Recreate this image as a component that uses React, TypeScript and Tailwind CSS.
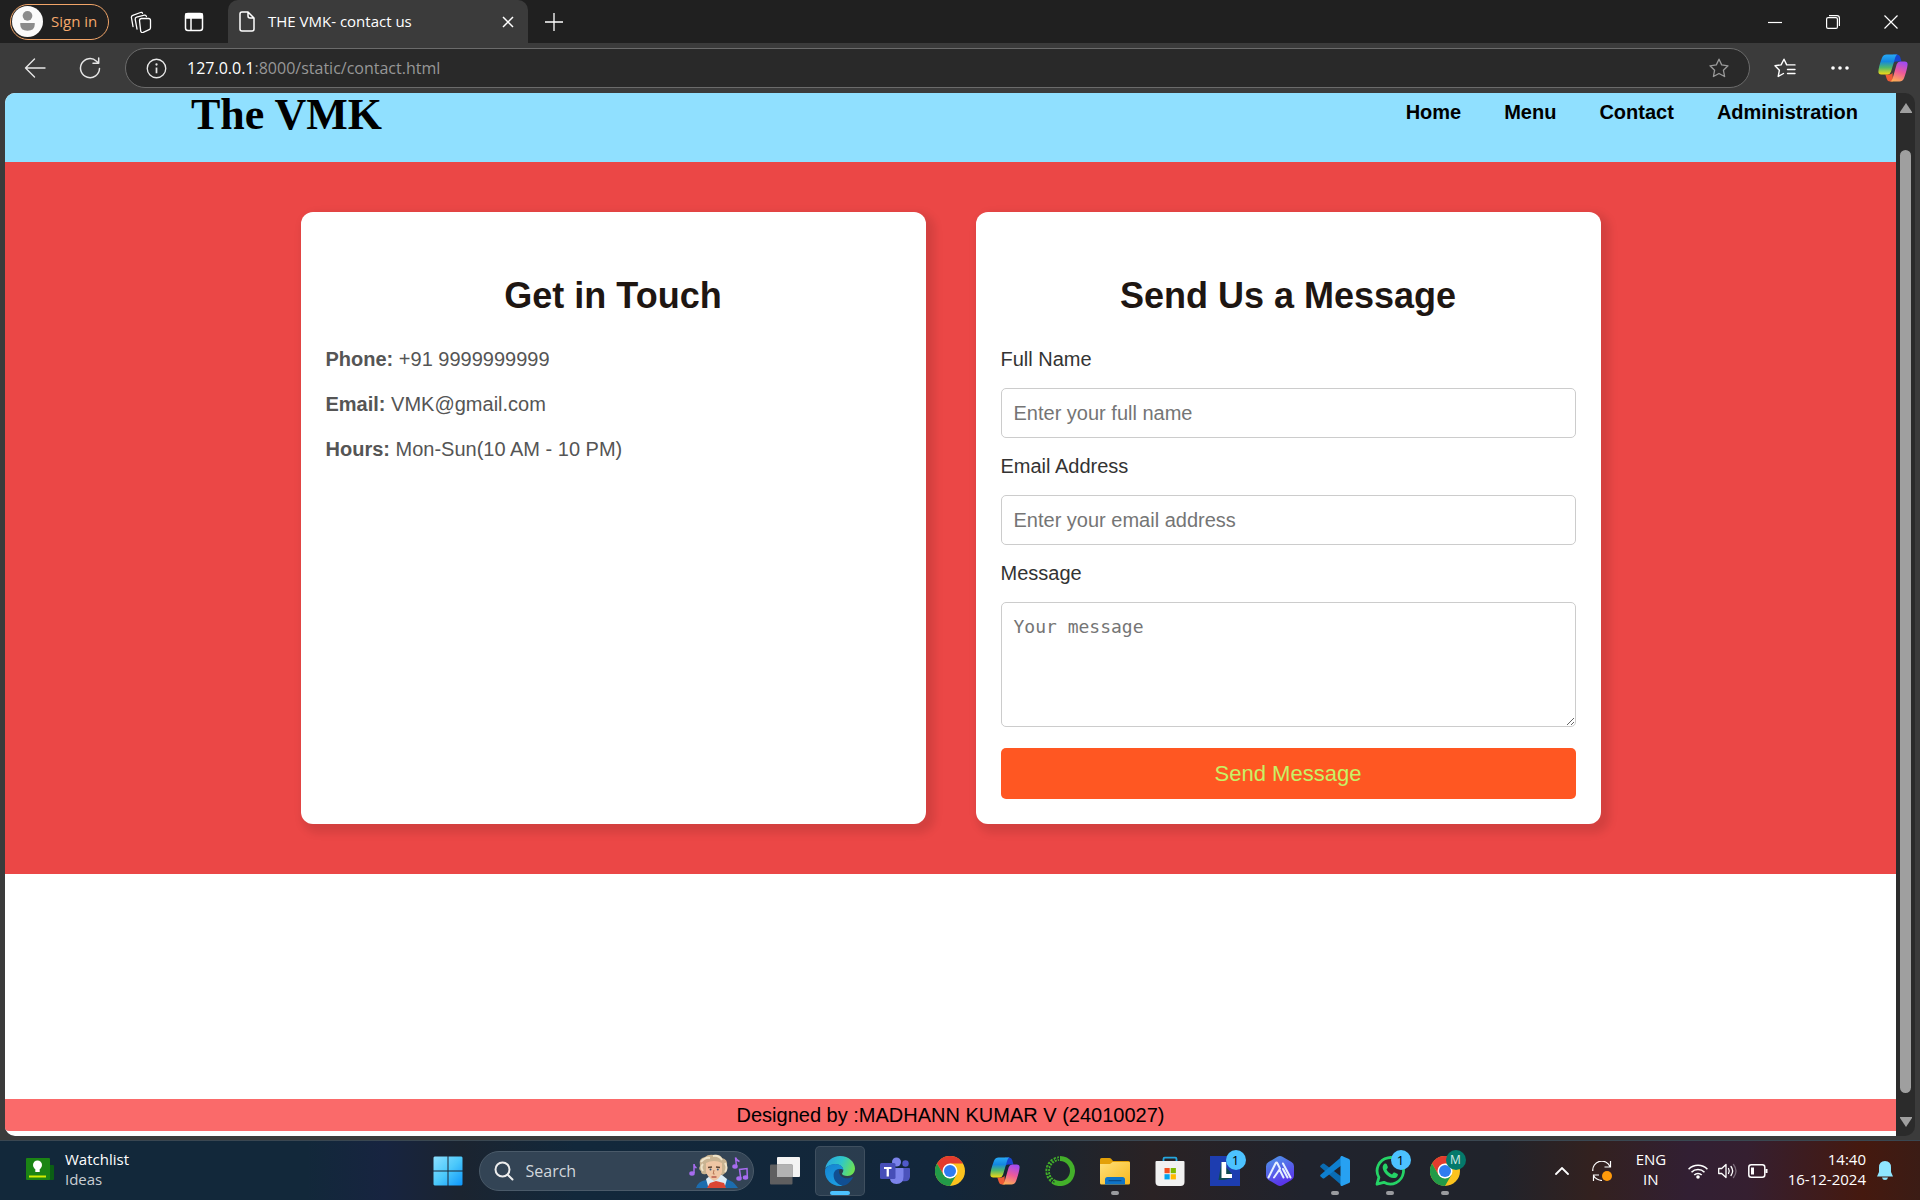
import React from "react";

const ui = "font-['Open_Sans','Noto_Sans',sans-serif]";
const sans = "font-['Liberation_Sans',Arial,sans-serif]";

function CopilotLogo({ id, className }: { id: string; className: string }) {
  return (
    <svg viewBox="0 0 30 30" className={className} aria-hidden="true">
      <defs>
        <linearGradient id={id + "a"} x1="0" y1="0" x2="0" y2="1">
          <stop offset="0" stopColor="#27a9f5" />
          <stop offset=".35" stopColor="#1487e0" />
          <stop offset=".65" stopColor="#4fb86c" />
          <stop offset="1" stopColor="#f5d913" />
        </linearGradient>
        <linearGradient id={id + "b"} x1="0.6" y1="0" x2="0.3" y2="1">
          <stop offset="0" stopColor="#a24bf0" />
          <stop offset=".5" stopColor="#ee5a98" />
          <stop offset="1" stopColor="#fdae55" />
        </linearGradient>
      </defs>
      <path d="M15 1.500h4q2.500 0 3.200 2.500l1.300 4.500h-5.500q-2 0-2.600 2z" fill="#1745cf" />
      <path d="M15 28.500h-3q-2.500 0-3.200-2.500L7.300 21.500h4q2.600 0 3.200-2z" fill="#ee5b36" />
      <path d="M8.500 1.500h11q-1.600.6-2.200 2.800l-4.300 14.400q-.9 2.800-3.600 2.800H3.300Q.2 21.500.4 18.500q.3-5 3.600-13.700Q5.500 1.500 8.500 1.500z" fill={`url(#${id}a)`} />
      <path d="M21.500 28.500h-9.300q1.700-.6 2.300-2.800l4.200-14.400q.9-2.800 3.600-2.800h4.400q3 0 2.900 3-.4 5-3.600 13.700-1.500 3.300-4.500 3.300z" fill={`url(#${id}b)`} />
    </svg>
  );
}

function ChromeLogo() {
  return (
    <svg viewBox="0 0 30 30" className="size-[30px]" aria-hidden="true">
      <circle cx="15" cy="15" r="15" fill="#fcc31e" />
      <path d="M2 7.500A15 15 0 0 1 28 7.500H15L8.500 18.800z" fill="#e33b2e" />
      <path d="M2 7.500A15 15 0 0 0 15 30l6.500-11.300L15 22.500 8.500 18.800z" fill="#229a48" />
      <circle cx="15" cy="15" r="7.500" fill="#fff" />
      <circle cx="15" cy="15" r="6" fill="#2e7cf0" />
    </svg>
  );
}

function EdgeLogo() {
  return (
    <svg viewBox="0 0 30 30" className="size-[30px]" aria-hidden="true">
      <defs>
        <linearGradient id="edgeTop" x1="0" y1=".3" x2="1" y2=".6">
          <stop offset="0" stopColor="#2aa7e0" />
          <stop offset=".5" stopColor="#2fc7c9" />
          <stop offset="1" stopColor="#6fe24f" />
        </linearGradient>
        <linearGradient id="edgeLeft" x1="0" y1="0" x2=".5" y2="1">
          <stop offset="0" stopColor="#1583d0" />
          <stop offset="1" stopColor="#1b9de2" />
        </linearGradient>
      </defs>
      <path d="M.3 12.500C1.500 5 7.500 0 15 0c9 0 15 6.400 15 12.500 0 4.500-3.500 7.500-7.500 7.500-3.500 0-5.500-1.300-5.500-2.300 0-.8 1.300-1.300 1.300-3.500 0-3-3-6-7.600-6C5.500 8.200 1.600 10.500.3 12.500z" fill="url(#edgeTop)" />
      <path d="M.2 13C2.300 9.500 6 8 10.500 8c5 0 7.900 3.200 7.900 6.200-1.300-2.300-6.900-1.700-8.200 3C8.800 22.500 12.500 28 18 29.700 8 31.500 0 24.500 0 15.500z" fill="url(#edgeLeft)" />
      <path d="M8.600 18.500c.3-3.600 3-5.700 6-5.800-2.200 5.300 2.200 9.600 7.400 9.600 2.500 0 4-.8 5-1.300.8-.2 1 .5.6 1.100C25.500 26 22 29.500 17.500 29.700 12 28.500 8.300 24 8.600 18.500z" fill="#114f93" />
    </svg>
  );
}

function TeamsLogo() {
  return (
    <svg viewBox="0 0 30 30" className="size-[30px]" aria-hidden="true">
      <circle cx="25.500" cy="7.500" r="3.200" fill="#5059c9" />
      <path d="M21 12h8.200q.8 0 .8.800v7.500q0 5-5 5h-4z" fill="#4b53bc" />
      <circle cx="16.500" cy="6" r="4.500" fill="#7b83eb" />
      <path d="M10 12h12.500q1 0 1 1v7.500q0 7.500-7 7.500T10 21z" fill="#7b83eb" />
      <rect x="0" y="7" width="15.500" height="16" rx="1.500" fill="#464eb8" />
      <path d="M4 11h7.500v2H8.900v7.500H6.600V13H4z" fill="#fff" />
    </svg>
  );
}

function AnacondaLogo() {
  return (
    <svg viewBox="0 0 30 30" className="size-[30px]" aria-hidden="true">
      <path d="M15 2.500A12.500 12.500 0 1 1 8 25.400" fill="none" stroke="#43b02a" strokeWidth="5" />
      <path d="M9.500 26.200A12.500 12.500 0 0 1 14 2.600" fill="none" stroke="#43b02a" strokeWidth="4.500" strokeDasharray="2.200 1.200" />
      <path d="M9.500 26.200A12.500 12.500 0 0 1 14 2.600" fill="none" stroke="#17302c" strokeWidth="1.200" strokeDasharray="1.500 1.300" />
    </svg>
  );
}

function FolderLogo() {
  return (
    <svg viewBox="0 0 30 30" className="size-[30px]" aria-hidden="true">
      <defs>
        <linearGradient id="folder" x1="0" y1="0" x2="1" y2="1">
          <stop offset="0" stopColor="#ffe07a" />
          <stop offset="1" stopColor="#f9b81c" />
        </linearGradient>
      </defs>
      <path d="M0 3.500Q0 2 1.500 2h8q.8 0 1.400.6L13 5h15.500Q30 5 30 6.500V12H0z" fill="#e3a008" />
      <path d="M0 8h9q1 0 1.700-.6L12.500 6H29q1 0 1 1v20q0 1.500-1.500 1.500h-27Q0 28.500 0 27z" fill="url(#folder)" />
      <path d="M5 28.500V23.500q0-2.500 2.500-2.500h15q2.500 0 2.500 2.500v5z" fill="#0f74c6" />
      <rect x="8.500" y="24" width="13" height="1.300" rx=".6" fill="#0a4c8a" />
    </svg>
  );
}

function StoreLogo() {
  return (
    <svg viewBox="0 0 30 30" className="size-[30px]" aria-hidden="true">
      <path d="M8.500 6.500V3q0-1.300 1.300-1.300h10.400q1.300 0 1.300 1.300v3.500" fill="none" stroke="#25a6de" strokeWidth="1.800" />
      <path d="M.5 6q0-1 1-1h27q1 0 1 1v20q0 4-4 4h-21q-4 0-4-4z" fill="#f1f1f1" />
      <rect x="9.500" y="12" width="5.200" height="5.200" fill="#f25022" />
      <rect x="15.700" y="12" width="5.200" height="5.200" fill="#7fba00" />
      <rect x="9.500" y="18.200" width="5.200" height="5.200" fill="#00a4ef" />
      <rect x="15.700" y="18.200" width="5.200" height="5.200" fill="#ffb900" />
    </svg>
  );
}

function LBoxLogo() {
  return (
    <svg viewBox="0 0 30 30" className="size-[30px]" aria-hidden="true">
      <rect width="30" height="30" fill="#1d3db0" />
      <path d="M11.500 6L8.500 24H14L22 22V18z" fill="#0d4a52" />
      <path d="M11.500 6h4.700v12H22v4H11.500z" fill="#fff" />
    </svg>
  );
}

function HexLogo() {
  return (
    <svg viewBox="0 0 30 30" className="size-[30px]" aria-hidden="true">
      <defs>
        <linearGradient id="hex" x1="0" y1="0" x2=".4" y2="1">
          <stop offset="0" stopColor="#4f9be8" />
          <stop offset="1" stopColor="#5a34ea" />
        </linearGradient>
      </defs>
      <path d="M12.500.8q2.500-1.400 5 0l9 5.200q2.500 1.400 2.500 4.200v9.600q0 2.800-2.500 4.200l-9 5.200q-2.500 1.400-5 0l-9-5.200Q1 22.600 1 19.800v-9.600Q1 7.400 3.500 6z" fill="url(#hex)" />
      <path d="M3.500 21.500L10.500 7.500q1-1.800 2 0L15 12.500M9 21.500l5.500-8M14.500 13.500l4 8M18 7.500l7.500 14M18 13l4.500 8.500" fill="none" stroke="#e6f0ff" strokeWidth="2" strokeLinejoin="round" strokeLinecap="round" />
    </svg>
  );
}

function VsCodeLogo() {
  return (
    <svg viewBox="0 0 30 30" className="size-[30px]" aria-hidden="true">
      <path d="M.6 9.500l2-1.700q.9-.7 1.700 0L22.500 21.500V30L.6 11.200q-.9-.8 0-1.700z" fill="#0a6cb3" />
      <path d="M.6 20.500l2 1.700q.9.700 1.700 0L22.500 8.500V0L.6 18.800q-.9.800 0 1.700z" fill="#0e7fcf" />
      <path d="M22 0l7 3q1 .5 1 1.500v21q0 1-1 1.500l-7 3q-1.500.2-1.500-1.300V1.300Q20.500-.2 22 0z" fill="#27a1f2" />
    </svg>
  );
}

function WhatsAppLogo() {
  return (
    <svg viewBox="0 0 30 30" className="size-[30px]" aria-hidden="true">
      <path d="M2 28.200l1.900-6.800A13.200 13.200 0 1 1 8.900 26.300z" fill="none" stroke="#25d366" strokeWidth="2.800" strokeLinejoin="round" />
      <path d="M9.800 7.600c.6-.3 1.400-.3 1.800.5l1.200 2.700c.2.500 0 1-.3 1.400l-1 1.200c1.300 2.400 3 3.900 5.500 5l1.400-1.600c.4-.5.8-.5 1.300-.3l2.600 1.300c.6.300.7.700.5 1.400-.6 2-2.300 3.100-4.300 2.900C13 21.500 8.500 16.500 7.700 12c-.2-1.700.8-3.800 2.100-4.400z" fill="#25d366" />
    </svg>
  );
}

function TaskViewLogo() {
  return (
    <svg viewBox="0 0 30 30" className="size-[30px]" aria-hidden="true">
      <rect x="7" y="1" width="23" height="20" rx="1" fill="#f3f3f3" />
      <rect x="0" y="8.500" width="22.500" height="20" rx="1" fill="#5f5f60" />
      <rect x="7" y="8.500" width="15.500" height="12.500" fill="#b3b3b3" />
    </svg>
  );
}

function WindowsLogo() {
  return (
    <svg viewBox="0 0 30 30" className="size-[30px]" aria-hidden="true">
      <defs>
        <linearGradient id="win" x1="0" y1="0" x2="30" y2="30" gradientUnits="userSpaceOnUse">
          <stop offset="0" stopColor="#8fe0ff" />
          <stop offset=".5" stopColor="#4cc9fb" />
          <stop offset="1" stopColor="#0a94fb" />
        </linearGradient>
      </defs>
      <path d="M1.500 .5H14.500V14.500H.5V1.500zM15.500 .5H28.500L29.500 1.500V14.500H15.500zM.5 15.500H14.500V29.500H1.500L.5 28.500zM15.500 15.500H29.500V28.500L28.500 29.500H15.500z" fill="url(#win)" />
    </svg>
  );
}

function ComposerArt() {
  return (
    <svg viewBox="0 0 60 34" className="h-[34px] w-[60px]" aria-hidden="true">
      <path d="M7 34Q9 27 17 26L25 23L34 24Q44 26 49 34z" fill="#1c6cae" />
      <path d="M17 25l5-4h11l5 4-2 7-9 2-8-2z" fill="#dcebf5" />
      <path d="M21 29l6-2 8 2 2 5H18z" fill="#dc4634" />
      <path d="M11 12Q9 4 16 3q3-3 9-2 6-1 8 3 6 1 5 8 1 5-3 8-2 2-4 0H17q-5 1-5-3-3-2-1-5z" fill="#c9b391" />
      <path d="M12 8q4-5 9-4M14 17q-3-4 0-7M36 18q3-4 0-9M24 2q6-1 9 4" fill="none" stroke="#efe3c9" strokeWidth="2" />
      <path d="M17 9q8-4 16 0v9q-2 7-8 9-6-3-8-9z" fill="#efc6a4" />
      <path d="M19 13.500l4-.5M27 13l4 .5" stroke="#5f4431" strokeWidth="1.300" />
      <circle cx="21.500" cy="15.500" r="1" fill="#3a5878" />
      <circle cx="28.800" cy="15.500" r="1" fill="#3a5878" />
      <path d="M25 16l-.8 4 1.500 0" fill="none" stroke="#b87856" strokeWidth="1" />
      <path d="M22.500 23h5" stroke="#b04a3d" strokeWidth="1.300" />
      <g fill="#a86cf0" stroke="#a86cf0" strokeWidth="1.500">
        <ellipse cx="3" cy="19.500" rx="2" ry="1.500" />
        <path d="M5 19V10q0 2.500 2.500 4" fill="none" />
        <ellipse cx="46" cy="12.500" rx="2" ry="1.500" />
        <path d="M47.500 12L46.500 3.500q1 3 4 4" fill="none" />
        <ellipse cx="50" cy="24.500" rx="2" ry="1.500" />
        <ellipse cx="56.500" cy="23.500" rx="2" ry="1.500" />
        <path d="M51.700 24L50.500 15.500l7.500-1L58.300 23" fill="none" />
      </g>
    </svg>
  );
}

function BrowserTabs() {
  return (
    <div className="flex h-[43px] shrink-0 bg-[#202020] text-white">
      <div className="flex items-center pl-[10px]">
        <button className="flex h-9 w-[99px] items-center gap-2 rounded-full border border-[#f0a468] pl-px text-[15px] text-[#f5a86c]">
          <svg viewBox="0 0 30 30" className="size-[31px]" aria-hidden="true">
            <circle cx="15" cy="15" r="15" fill="#fafafa" />
            <circle cx="15" cy="9.500" r="4.700" fill="#8b8b8b" />
            <path d="M8 16.500h14v1.500q0 6-7 6t-7-6z" fill="#8b8b8b" />
          </svg>
          Sign in
        </button>
        <button aria-label="Workspaces" className="ml-[21px]">
          <svg viewBox="0 0 22 22" className="size-[22px]" fill="none" stroke="#fff" strokeWidth="1.300" strokeLinejoin="round" strokeLinecap="round">
            <path d="M9.500 9.500q0-1.700 1.700-2h7.300q2 0 2 2v7q0 1.500-1.300 2.200l-6 2.600q-2 .8-2.500-1.200z" />
            <path d="M7 18L5.200 8.300q-.2-1.700 1.400-2.200l7.800-1.900q1.700-.3 2 1.300" />
            <path d="M3 15.500L1.400 6.500Q1.200 4.900 2.800 4.300L10.500 1.500q1.600-.5 2 .8" />
          </svg>
        </button>
        <button aria-label="Tab actions menu" className="ml-8">
          <svg viewBox="0 0 20 20" className="size-5" fill="none" stroke="#fff" strokeWidth="1.500">
            <rect x="1.500" y="1.500" width="17" height="17" rx="2.500" />
            <path d="M2 2h16v4H2z" fill="#fff" />
            <path d="M7 6v12" />
          </svg>
        </button>
      </div>
      <div className="ml-6 flex h-[43px] w-[300px] items-center rounded-t-[10px] bg-[#3b3b3b] px-[11px]">
        <svg viewBox="0 0 16 21" className="h-[21px] w-4" fill="none" stroke="#fff" strokeWidth="1.500" strokeLinejoin="round" aria-hidden="true">
          <path d="M1 3q0-2 2-2h6l6 6v11q0 2-2 2H3q-2 0-2-2zM9 1v4q0 2 2 2h4" />
        </svg>
        <span className="ml-[13px] flex-1 pb-px text-[15px] whitespace-nowrap">THE VMK- contact us</span>
        <button aria-label="Close tab" className="mr-[3px]">
          <svg viewBox="0 0 12 12" className="size-3" stroke="#fff" strokeWidth="1.500"><path d="M1 1l10 10M11 1L1 11" /></svg>
        </button>
      </div>
      <button aria-label="New tab" className="ml-[17px]">
        <svg viewBox="0 0 18 18" className="size-[18px]" stroke="#fff" strokeWidth="1.300"><path d="M9 0v18M0 9h18" /></svg>
      </button>
      <div className="ml-auto flex items-center gap-11 pr-[22px]">
        <button aria-label="Minimize"><svg viewBox="0 0 14 14" className="size-[14px]" stroke="#fff" strokeWidth="1.200"><path d="M0 7.500h14" /></svg></button>
        <button aria-label="Restore">
          <svg viewBox="0 0 14 14" className="size-[14px]" fill="none" stroke="#fff" strokeWidth="1.200">
            <rect x=".6" y="2.600" width="10.800" height="10.800" rx="1.500" />
            <path d="M3 .6h8q2.400 0 2.400 2.400v8" />
          </svg>
        </button>
        <button aria-label="Close"><svg viewBox="0 0 14 14" className="size-[14px]" stroke="#fff" strokeWidth="1.200"><path d="M.5.500l13 13M13.500.5l-13 13" /></svg></button>
      </div>
    </div>
  );
}

const starPath = "M10 1.200l2.700 5.700 6.300.9-4.600 4.400 1.200 6.300L10 15.500l-5.600 3 1.200-6.300L1 7.800l6.300-.9z";

function Toolbar() {
  return (
    <div className="flex h-[50px] shrink-0 items-center bg-[#3b3b3b] pr-3 pl-6">
      <button aria-label="Back">
        <svg viewBox="0 0 22 20" className="h-5 w-[22px]" fill="none" stroke="#e6e6e6" strokeWidth="1.400" strokeLinecap="round" strokeLinejoin="round"><path d="M21 10H1.500M10.500 1l-9 9 9 9" /></svg>
      </button>
      <button aria-label="Refresh" className="ml-[33px]">
        <svg viewBox="0 0 22 22" className="size-[22px]" fill="none" stroke="#e6e6e6" strokeWidth="1.500" strokeLinecap="round" strokeLinejoin="round"><path d="M20.500 11.500A9.500 9.500 0 1 1 17.500 4.200L19.500 6M19.700 1v5.300H14" /></svg>
      </button>
      <div className="ml-6 flex h-10 flex-1 items-center rounded-full border border-[#6b6b6b] bg-[#292929] px-5">
        <svg viewBox="0 0 22 22" className="size-[21px]" aria-hidden="true">
          <circle cx="11" cy="11" r="9.700" fill="none" stroke="#e8e8e8" strokeWidth="1.400" />
          <path d="M11 10v6" stroke="#e8e8e8" strokeWidth="1.800" />
          <circle cx="11" cy="6.800" r="1.200" fill="#e8e8e8" />
        </svg>
        <a href="#address" className="ml-5 flex-1 text-base text-[#979797]"><span className="text-white">127.0.0.1</span>:8000/static/contact.html</a>
        <button aria-label="Add to favorites">
          <svg viewBox="0 0 20 20" className="size-5" fill="none" stroke="#9a9a9a" strokeWidth="1.300" strokeLinejoin="round"><path d={starPath} /></svg>
        </button>
      </div>
      <button aria-label="Favorites" className="ml-6">
        <svg viewBox="0 0 22 20" className="h-5 w-[22px]" fill="none" stroke="#fff" strokeWidth="1.400" strokeLinejoin="round" strokeLinecap="round"><path d="M9.500 15.500l-5.300 3 1.200-6.300L1 7.800l6.100-.9L10 1.200l2.700 5.700H21M13.500 11.500H21M13.500 15.500H21" /></svg>
      </button>
      <button aria-label="Settings and more" className="ml-[35px]">
        <svg viewBox="0 0 18 4" className="h-1 w-[18px]" fill="#fff"><circle cx="2" cy="2" r="1.800" /><circle cx="9" cy="2" r="1.800" /><circle cx="16" cy="2" r="1.800" /></svg>
      </button>
      <button aria-label="Copilot" className="ml-[29px]"><CopilotLogo id="cpTop" className="size-[30px]" /></button>
    </div>
  );
}

const field = "w-full rounded-[5px] border border-[#ccc] bg-white px-3 placeholder:text-[#757575] placeholder:opacity-100";
const card = "flex-1 rounded-xl bg-white p-[25px] shadow-[5px_5px_8px_4px_rgba(0,0,0,0.1)]";
const cardTitle = "mt-[34px] text-center text-[36px] leading-[50px] font-bold text-[#1e1612]";

function ContactPage() {
  return (
    <div className={"flex min-w-0 flex-1 flex-col rounded-l-[10px] bg-white " + sans}>
      <header className="flex h-[69px] justify-between rounded-tl-[10px] bg-[#90e0ff] pr-[38px] pl-[186px] text-black">
        <h1 className="font-['Liberation_Serif',serif] text-[44px] leading-[44px] font-bold">The VMK</h1>
        <nav className="flex gap-[43px] text-xl leading-[39px] font-bold">
          <a href="#home">Home</a>
          <a href="#menu">Menu</a>
          <a href="#contact">Contact</a>
          <a href="#administration">Administration</a>
        </nav>
      </header>
      <main className="flex justify-center bg-[#eb4746] py-[50px] text-xl">
        <div className="flex w-full max-w-[1300px] gap-[50px]">
          <section className={card}>
            <h2 className={cardTitle}>Get in Touch</h2>
            <div className="mt-[23px] flex flex-col gap-[15px] leading-[30px] text-[#555]">
              <p><strong>Phone:</strong> +91 9999999999</p>
              <p><strong>Email:</strong> VMK@gmail.com</p>
              <p><strong>Hours:</strong> Mon-Sun(10 AM - 10 PM)</p>
            </div>
          </section>
          <section className={card}>
            <h2 className={cardTitle}>Send Us a Message</h2>
            <form className="mt-[23px] flex flex-col leading-[30px] text-[#333]" onSubmit={(e) => e.preventDefault()}>
              <label htmlFor="name">Full Name</label>
              <input id="name" type="text" placeholder="Enter your full name" className={field + " mt-[14px] mb-[13px] h-[50px]"} />
              <label htmlFor="email">Email Address</label>
              <input id="email" type="email" placeholder="Enter your email address" className={field + " mt-[14px] mb-[13px] h-[50px]"} />
              <label htmlFor="message">Message</label>
              <textarea id="message" placeholder="Your message" className={field + " mt-[14px] block h-[125px] resize-y py-3 font-['DejaVu_Sans_Mono',monospace] text-lg leading-6"} />
              <button type="submit" className="mt-[21px] h-[51px] rounded-[5px] bg-[#ff5722] text-[22px] text-[#c8f065]">Send Message</button>
            </form>
          </section>
        </div>
      </main>
      <footer className="mt-auto mb-[5px] rounded-bl-[4px] bg-[#fa6a6a] text-center text-xl leading-8 text-black">Designed by :MADHANN KUMAR V (24010027)</footer>
    </div>
  );
}

function Scrollbar() {
  return (
    <div className="flex w-[19px] shrink-0 flex-col items-center rounded-r-[10px] bg-[#2b2b2b] pt-[10px] pb-[9px]">
      <svg viewBox="0 0 12 10" className="h-[10px] w-3" fill="#9f9f9f" aria-hidden="true"><path d="M6 0l6 9v1H0V9z" /></svg>
      <div className="mt-[37px] mb-6 w-[11px] flex-1 rounded-full bg-[#9f9f9f]" />
      <svg viewBox="0 0 12 10" className="h-[10px] w-3" fill="#9f9f9f" aria-hidden="true"><path d="M6 10l6-9V0H0v1z" /></svg>
    </div>
  );
}

type TaskApp = { name: string; icon: React.ReactNode; active?: boolean; running?: boolean; badge?: string; profile?: boolean };

const apps: TaskApp[] = [
  { name: "Task view", icon: <TaskViewLogo /> },
  { name: "Edge", icon: <EdgeLogo />, active: true },
  { name: "Teams", icon: <TeamsLogo /> },
  { name: "Chrome", icon: <ChromeLogo /> },
  { name: "Copilot", icon: <CopilotLogo id="cpBar" className="size-[30px]" /> },
  { name: "Anaconda", icon: <AnacondaLogo /> },
  { name: "File Explorer", icon: <FolderLogo />, running: true },
  { name: "Store", icon: <StoreLogo /> },
  { name: "L app", icon: <LBoxLogo />, badge: "1" },
  { name: "Hexagon app", icon: <HexLogo /> },
  { name: "Code editor", icon: <VsCodeLogo />, running: true },
  { name: "WhatsApp", icon: <WhatsAppLogo />, running: true, badge: "1" },
  { name: "Chrome profile", icon: <ChromeLogo />, running: true, badge: "M", profile: true },
];

function Taskbar() {
  return (
    <footer className="grid h-[60px] shrink-0 grid-cols-[1fr_auto_1fr] items-center border-t border-[#3a4751] bg-[linear-gradient(90deg,#12283a_0%,#12283a_16%,#172440_20%,#1b2430_24%,#12283b_30%,#12263a_49%,#1a2530_54%,#2a2224_60%,#20232d_68%,#20232b_78%,#33211f_83%,#321f33_88%,#351f30_91%,#45190f_97%,#3b1c15_100%)] text-[15px] leading-5 text-white">
      <button className="flex items-center gap-[11px] pb-[3px] pl-[26px] text-left">
        <svg viewBox="0 0 28 24" className="h-6 w-7" aria-hidden="true">
          <rect x="20" y="8" width="8" height="15" rx="1" fill="#0b5e14" />
          <rect x="0" y="1" width="24" height="22" rx="1" fill="#1b8414" />
          <circle cx="11.500" cy="8" r="4.500" fill="#fff" />
          <path d="M9.300 11h4.400v4H9.300z" fill="#fff" />
          <path d="M3 18.500h17v2H3z" fill="#d4ec00" />
        </svg>
        <span className="flex flex-col">
          <span>Watchlist</span>
          <span className="text-[#c8ced3]">Ideas</span>
        </span>
      </button>
      <div className="flex items-center gap-[6px] pr-7">
        <button aria-label="Start" className="flex size-[50px] items-center justify-center"><WindowsLogo /></button>
        <label className="flex h-10 w-[275px] items-center rounded-full border border-[#4a5a69] bg-[#334455] pl-[14px]">
          <svg viewBox="0 0 20 20" className="size-5 shrink-0" fill="none" stroke="#ededed" strokeWidth="2" strokeLinecap="round" aria-hidden="true">
            <circle cx="8.500" cy="8.500" r="7" />
            <path d="M13.700 13.700L18.500 18.500" />
          </svg>
          <input type="text" aria-label="Search" placeholder="Search" className="ml-3 w-0 flex-1 bg-transparent text-base placeholder:text-[#d2d7dc] placeholder:opacity-100" />
          <span className="mr-1"><ComposerArt /></span>
        </label>
        <div className="flex gap-[5px]">
          {apps.map((a) => (
            <button
              key={a.name}
              aria-label={a.name}
              className={"relative flex size-[50px] items-center justify-center rounded-[5px] " + (a.active ? "border border-white/10 bg-white/10" : "")}
            >
              {a.icon}
              {a.active && <span className="absolute bottom-0 left-1/2 h-1 w-5 -translate-x-1/2 rounded-full bg-[#4cc2ff]" />}
              {a.running && <span className="absolute bottom-px left-1/2 h-1 w-2 -translate-x-1/2 rounded-full bg-[#9a9b9f]" />}
              {a.badge && (
                <span
                  className={
                    "absolute top-1 right-1 flex size-5 items-center justify-center rounded-full " +
                    (a.profile ? "bg-[#04796b] text-xs text-[#d5ebe8]" : "bg-[#4cc2ff] text-[13px] text-black")
                  }
                >
                  {a.badge}
                </span>
              )}
            </button>
          ))}
        </div>
      </div>
      <div className="flex items-center justify-end pr-[27px]">
        <button aria-label="Show hidden icons">
          <svg viewBox="0 0 14 8" className="h-2 w-[14px]" fill="none" stroke="#fff" strokeWidth="1.800" strokeLinecap="round"><path d="M1 7l6-6 6 6" /></svg>
        </button>
        <button aria-label="Updates" className="ml-[23px]">
          <svg viewBox="0 0 20 20" className="size-5" fill="none" stroke="#fff" strokeWidth="1.200">
            <path d="M.8 10A9 9 0 0 1 18 5.500M18.500 0v6h-6M10 19.500Q4 19 1.500 14.500M1.500 20v-6h5.500" />
            <circle cx="15" cy="15" r="5" fill="#ff9a0b" stroke="none" />
          </svg>
        </button>
        <button className="ml-6 w-[30px] pb-[3px] text-center whitespace-nowrap">ENG<br />IN</button>
        <button className="ml-[22px] flex items-center gap-[10px]" aria-label="Network, volume and battery">
          <svg viewBox="0 0 20 16" className="h-4 w-5" fill="none" stroke="#fff" strokeWidth="1.600">
            <path d="M.6 6.200a13.300 13.300 0 0 1 18.800 0M3.500 9.200a9.200 9.200 0 0 1 13 0M6.300 12a5.200 5.200 0 0 1 7.400 0" />
            <circle cx="10" cy="14" r="1.800" fill="#fff" stroke="none" />
          </svg>
          <svg viewBox="0 0 20 16" className="h-4 w-5" fill="none" stroke="#fff" strokeWidth="1.300" strokeLinejoin="round" strokeLinecap="round">
            <path d="M.7 5.500h3L8 1.500v13l-4.300-4h-3zM10.500 5.500q1.500 2.500 0 5M13 3.500q3.300 4.500 0 9" />
            <path d="M15.500 1.500q5 6.500 0 13" stroke="#7a6a78" />
          </svg>
          <svg viewBox="0 0 20 14" className="h-[14px] w-5" fill="none" stroke="#fff" strokeWidth="1.500">
            <rect x=".8" y=".8" width="16" height="12.400" rx="2.500" />
            <path d="M3 3.500h3v7H3z" fill="#fff" stroke="none" />
            <path d="M18.500 5v4" strokeWidth="2" />
          </svg>
        </button>
        <button className="ml-5 pb-[3px] text-right whitespace-nowrap">14:40<br />16-12-2024</button>
        <button aria-label="Notifications" className="ml-[11px]">
          <svg viewBox="0 0 16 19" className="h-[19px] w-4" fill="#8fe6ff"><path d="M8 0q6 0 6 6.500V11l2 4.500H0L2 11V6.500Q2 0 8 0zM5 16.500h6q-.5 2.500-3 2.500t-3-2.500z" /></svg>
        </button>
      </div>
    </footer>
  );
}

export default function App() {
  return (
    <div className={"flex min-h-screen flex-col bg-[#3b3b3b] " + ui}>
      <BrowserTabs />
      <Toolbar />
      <div className="flex flex-1 pr-[5px] pb-1 pl-[5px]">
        <ContactPage />
        <Scrollbar />
      </div>
      <Taskbar />
    </div>
  );
}
